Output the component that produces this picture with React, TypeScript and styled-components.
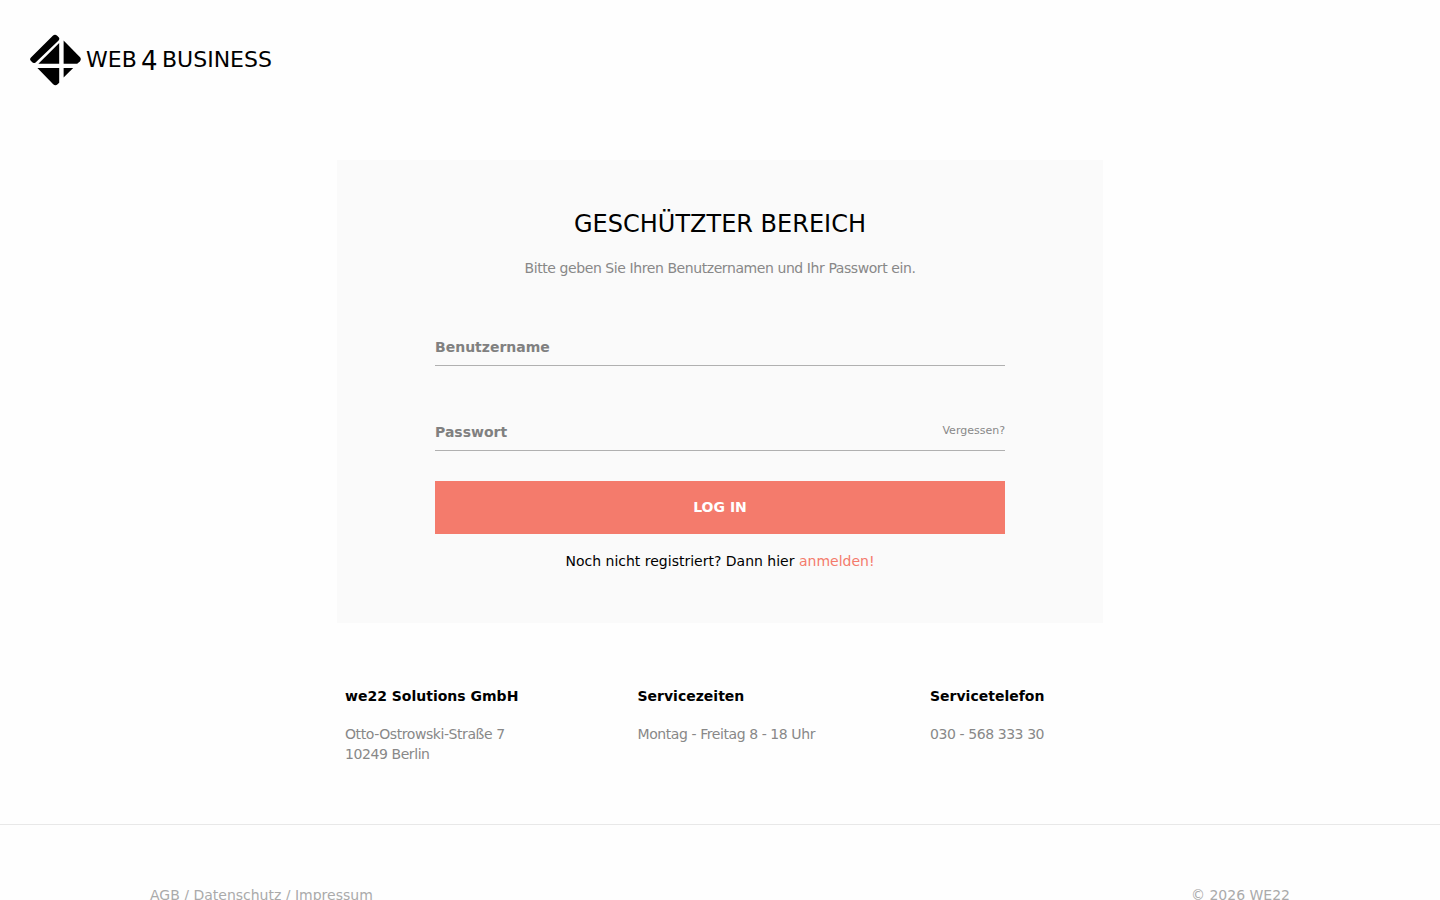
import React from "react";
import styled, { createGlobalStyle } from "styled-components";

const GlobalStyle = createGlobalStyle`
  *, *::before, *::after { box-sizing: border-box; }
  body {
    margin: 0;
    background: #fefefe;
    color: #000;
    font: 14px/20px "DejaVu Sans", sans-serif;
  }
  h1, h2, p { margin: 0; }
  a { color: inherit; text-decoration: none; }
`;

const Header = styled.header`
  padding: 34px 30px;
  margin-bottom: 40px;
`;

const HomeLink = styled.a`
  display: inline-block;
  vertical-align: top;
`;

const LogoSvg = styled.svg`
  display: block;
  width: 252px;
  height: 52px;
`;

const LogoWord = styled.text<{ $size: number }>`
  font-family: "DejaVu Sans", sans-serif;
  font-size: ${(p) => p.$size}px;
`;

const Card = styled.main`
  max-width: 766px;
  margin: 0 auto;
  padding: 49px 98px 52px;
  background: #fafafa;
  text-align: center;
`;

const Title = styled.h1`
  font-size: 24px;
  line-height: 30px;
  font-weight: 400;
  text-transform: uppercase;
`;

const MutedText = styled.p`
  color: #888;
  letter-spacing: -0.03em;
`;

const Intro = styled(MutedText)`
  margin: 19px 0 48px;
`;

const Form = styled.form`
  display: flex;
  flex-direction: column;
`;

const Field = styled.div`
  display: flex;
  align-items: center;
  height: 40px;
  margin-bottom: 45px;
  border-bottom: 1px solid #b0b0b0;

  &:last-of-type { margin-bottom: 30px; }
`;

const Input = styled.input`
  flex: 1;
  min-width: 0;
  height: 39px;
  padding: 2px 0 0;
  border: 0;
  outline: 0;
  background: transparent;
  color: #000;
  font: bold 14px/20px "DejaVu Sans", sans-serif;

  &::placeholder { color: #808080; opacity: 1; }
`;

const ForgotLink = styled.a`
  color: #888;
  font-size: 11px;
`;

const Submit = styled.button`
  height: 53px;
  padding: 0 0 2px;
  border: 0;
  background: #f47b6c;
  color: #fff;
  font: bold 14px/20px "DejaVu Sans", sans-serif;
  text-transform: uppercase;
  cursor: pointer;
`;

const Register = styled.p`
  margin-top: 17px;
`;

const AccentLink = styled.a`
  color: #f47b6c;
`;

const Contact = styled.section`
  display: grid;
  grid-template-columns: 39% 39% 1fr;
  max-width: 750px;
  margin: 0 auto;
  padding: 63px 0 60px;
`;

const ContactTitle = styled.h2`
  margin-bottom: 18px;
  font-size: 14px;
  line-height: 20px;
`;

const Footer = styled.footer`
  border-top: 1px solid #e8e8e8;
  padding: 60px 30px;
`;

const FooterInner = styled.div`
  display: flex;
  justify-content: space-between;
  max-width: 1140px;
  margin: 0 auto;
  color: #aaa;
`;

function Logo() {
  return (
    <LogoSvg viewBox="0 0 252 52" role="img" aria-label="Web4Business">
      <path d="M1.2 23.2 L22.8 1.7 Q25 -0.3 27.2 1.7 L28.7 3.2 Q30 4.8 28.6 6.4 L5.6 28.4 Q3.6 30 2 28 L0.8 26.8 Q-0.8 25 1.2 23.2 Z" />
      <path d="M8.4 29.8 L29.2 9 V29.8 Z" />
      <path d="M33.6 6.6 L49.8 23 Q51.8 25.2 49.8 27.4 L47.2 29.8 H33.6 Z" />
      <path d="M7.4 34 H29.2 V48.8 L27.6 50.2 Q25.4 52.2 23.2 50.2 Z" />
      <path d="M33.6 34 H43.2 L33.6 43.6 Z" />
      <LogoWord $size={22} x="56" y="33">WEB</LogoWord>
      <LogoWord $size={26} x="111" y="36">4</LogoWord>
      <LogoWord $size={22} x="132" y="33">BUSINESS</LogoWord>
    </LogoSvg>
  );
}

export default function App() {
  return (
    <>
      <GlobalStyle />
      <Header>
        <HomeLink href="#"><Logo /></HomeLink>
      </Header>
      <Card>
        <Title>Geschützter Bereich</Title>
        <Intro>Bitte geben Sie Ihren Benutzernamen und Ihr Passwort ein.</Intro>
        <Form onSubmit={(e) => e.preventDefault()}>
          <Field>
            <Input type="text" name="username" aria-label="Benutzername" placeholder="Benutzername" />
          </Field>
          <Field>
            <Input type="password" name="password" aria-label="Passwort" placeholder="Passwort" />
            <ForgotLink href="#">Vergessen?</ForgotLink>
          </Field>
          <Submit type="submit">Log in</Submit>
        </Form>
        <Register>
          Noch nicht registriert? Dann hier <AccentLink href="#">anmelden!</AccentLink>
        </Register>
      </Card>
      <Contact>
        <div>
          <ContactTitle>we22 Solutions GmbH</ContactTitle>
          <MutedText>Otto-Ostrowski-Straße 7<br />10249 Berlin</MutedText>
        </div>
        <div>
          <ContactTitle>Servicezeiten</ContactTitle>
          <MutedText>Montag - Freitag 8 - 18 Uhr</MutedText>
        </div>
        <div>
          <ContactTitle>Servicetelefon</ContactTitle>
          <MutedText>030 - 568 333 30</MutedText>
        </div>
      </Contact>
      <Footer>
        <FooterInner>
          <nav>
            <a href="#">AGB</a> / <a href="#">Datenschutz</a> / <a href="#">Impressum</a>
          </nav>
          <span>© 2026 WE22</span>
        </FooterInner>
      </Footer>
    </>
  );
}
